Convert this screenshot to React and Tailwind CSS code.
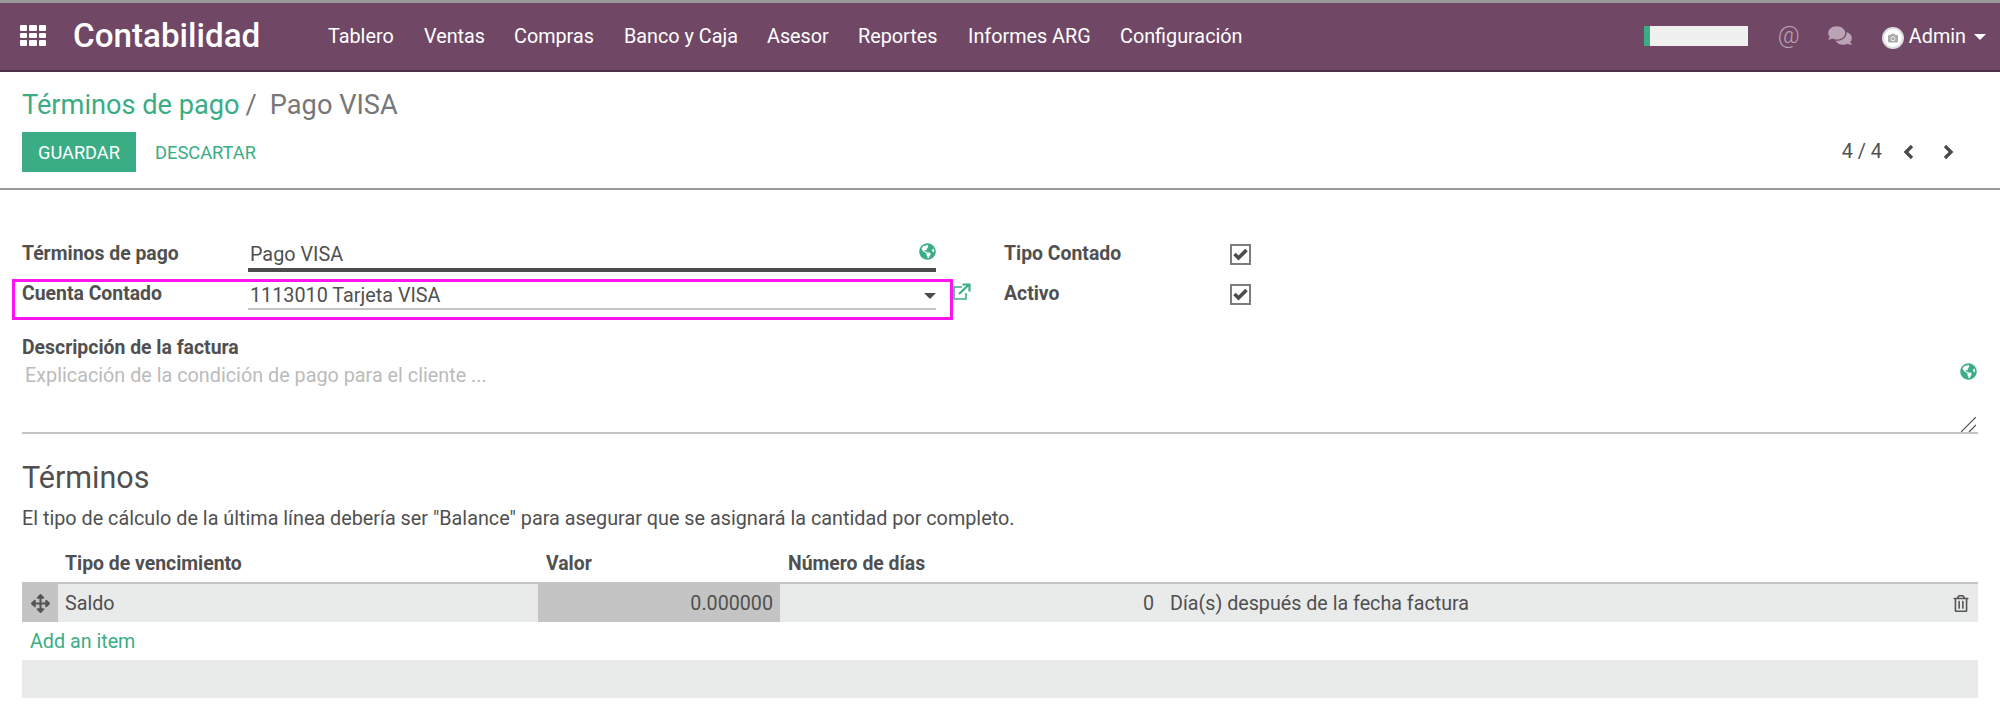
// App.jsx
import { FaGlobeAmericas, FaComments, FaArrowsAlt, FaRegTrashAlt, FaCamera } from "react-icons/fa";

const menus = [
  ["Tablero", "w-[96px]"],
  ["Ventas", "w-[90px]"],
  ["Compras", "w-[110px]"],
  ["Banco y Caja", "w-[143px]"],
  ["Asesor", "w-[91px]"],
  ["Reportes", "w-[110px]"],
  ["Informes ARG", "w-[152px]"],
  ["Configuración", "w-[140px]"],
];

function AppsIcon() {
  return (
    <div className="grid grid-cols-3 gap-[2px] w-[26px] h-[21px]">
      {[...Array(9)].map((_, i) => (
        <div key={i} className="bg-white rounded-[1px]" />
      ))}
    </div>
  );
}

function Checkbox() {
  return (
    <div className="w-[21px] h-[21px] border-2 border-[#7c7c7c] flex items-center justify-center">
      <svg className="w-[15px] h-[13px]" viewBox="0 0 15 13" fill="none" stroke="#4c4c4c" strokeWidth="3.6">
        <path d="M1.5 6 L5.5 10 L13.5 2" />
      </svg>
    </div>
  );
}

function Chevron({ d }) {
  return (
    <svg className="w-[11px] h-[16px]" viewBox="0 0 11 16" fill="none" stroke="#4c4c4c" strokeWidth="3.4">
      <path d={d} />
    </svg>
  );
}

function Navbar() {
  return (
    <div className="h-[72px] shrink-0 bg-[#704865] border-t-[3px] border-t-[#9a9a9a] border-b-[2px] border-b-[#4e3148] flex items-center text-white">
      <div className="ml-[20px] w-[53px] -mt-[2px]">
        <AppsIcon />
      </div>
      <div className="w-[255px] text-[33.2px] font-medium leading-none -mt-[1px]">Contabilidad</div>
      <div className="flex text-[19.8px] mt-[1px]">
        {menus.map(([name, width]) => (
          <div key={name} className={width}>{name}</div>
        ))}
      </div>
      <div className="ml-auto flex items-center mr-[14px]">
        <div className="w-[104px] h-[20px] bg-[#f0f0f0] flex mr-[30px] -mt-[1px]">
          <div className="w-[6px] bg-[#3aad85]" />
        </div>
        <div className="w-[50px] text-[24px] font-light leading-none text-[#b9a3b4] -mt-[3px]">@</div>
        <FaComments className="w-[24px] h-[21px] text-[#b9a3b4] mr-[30px] -mt-[2px]" />
        <div className="w-[22px] h-[22px] rounded-full bg-white border-2 border-[#ddd] flex items-center justify-center mr-[5px] mt-[3px]">
          <FaCamera className="w-[10px] h-[10px] text-[#aaa]" />
        </div>
        <div className="text-[19.8px] mt-[1px]">Admin</div>
        <div className="ml-[8px] border-x-[6px] border-x-transparent border-t-[6px] border-t-white" />
      </div>
    </div>
  );
}

function ControlPanel() {
  return (
    <div className="h-[118px] shrink-0 border-b-[2px] border-b-[#999] px-[22px] pt-[16px]">
      <div className="text-[27.2px] leading-[34px] text-[#777]">
        <span className="text-[#3aad85]">Términos de pago</span>
        <span className="ml-[6px]">/</span>
        <span className="ml-[13px]">Pago VISA</span>
      </div>
      <div className="flex items-center mt-[10px]">
        <div className="w-[114px] h-[40px] bg-[#3aad85] text-white text-[18.2px] flex items-center justify-center pt-[1px]">GUARDAR</div>
        <div className="ml-[19px] text-[18.3px] text-[#3aad85] pt-[1px]">DESCARTAR</div>
        <div className="ml-auto flex items-center text-[#505050] mr-[24px]">
          <div className="text-[19.8px] mr-[21px] -mt-[1px]">4 / 4</div>
          <div className="mr-[29px] flex"><Chevron d="M9 2 L3 8 L9 14" /></div>
          <div className="flex"><Chevron d="M2 2 L8 8 L2 14" /></div>
        </div>
      </div>
    </div>
  );
}

function MainFields() {
  return (
    <div className="flex items-start">
      <div className="w-[914px] relative">
        <div className="flex h-[39px] items-start">
          <div className="w-[226px] font-bold text-[19.4px] leading-[26px] pt-[8px]">Términos de pago</div>
          <div className="flex-1 h-[39px] border-b-[4px] border-b-[#4c4c4c] relative text-[19.8px] leading-[26px] pt-[9px] pl-[2px]">
            Pago VISA
            <FaGlobeAmericas className="absolute right-0 top-[10px] w-[17px] h-[17px] text-[#3aad85]" />
          </div>
        </div>
        <div className="flex h-[40px] items-start mt-[7px]">
          <div className="w-[226px] font-bold text-[19.4px] leading-[26px] pt-[2px]">Cuenta Contado</div>
          <div className="flex-1 h-[31px] border-b-[2px] border-b-[#c4c4c4] relative text-[19.8px] leading-[26px] pt-[4px] pl-[2px]">
            1113010 Tarjeta VISA
            <div className="absolute right-0 top-[14px] border-x-[6px] border-x-transparent border-t-[6px] border-t-[#4c4c4c]" />
          </div>
        </div>
        <div className="absolute left-[-10px] right-[-17px] top-[46px] h-[41px] border-[3px] border-[#ff14f0]" />
        <svg className="absolute right-[-35px] top-[50px] w-[18px] h-[17px]" viewBox="0 0 18 17" fill="none" stroke="#3aad85">
          <path d="M9 4 H1 V16 H13 V10" strokeWidth="1.6" />
          <path d="M6 11 L15 2.5 M9.5 1.5 H16.5 V8.5" strokeWidth="2.2" />
        </svg>
      </div>
      <div className="ml-[68px] w-[247px] mt-[1px] font-bold text-[19.4px]">
        <div className="flex items-center justify-between h-[40px]">
          <div className="leading-[26px] -mt-[1px]">Tipo Contado</div>
          <Checkbox />
        </div>
        <div className="flex items-center justify-between h-[40px]">
          <div className="leading-[26px] -mt-[1px]">Activo</div>
          <Checkbox />
        </div>
      </div>
    </div>
  );
}

function Description() {
  return (
    <div className="mt-[15px]">
      <div className="font-bold text-[19.4px] leading-[26px] pt-[1px]">Descripción de la factura</div>
      <div className="h-[73px] border-b-[2px] border-b-[#c4c4c4] relative text-[19.8px] leading-[26px] text-[#bbb] pl-[3px] pt-[2px]">
        Explicación de la condición de pago para el cliente ...
        <FaGlobeAmericas className="absolute right-[1px] top-[2px] w-[17px] h-[17px] text-[#3aad85]" />
        <svg className="absolute right-[2px] bottom-0 w-[15px] h-[15px]" viewBox="0 0 15 15" stroke="#4c4c4c" strokeWidth="1.2" fill="none">
          <path d="M0 15 L15 0 M8 15 L15 8" />
        </svg>
      </div>
    </div>
  );
}

function TermsTable() {
  return (
    <div className="mt-[25px]">
      <div className="text-[30.5px] leading-[36px] pt-[1px] h-[36px]">Términos</div>
      <div className="text-[19.8px] leading-[26px] mt-[10px] pt-[1px] h-[26px]">
        El tipo de cálculo de la última línea debería ser "Balance" para asegurar que se asignará la cantidad por completo.
      </div>
      <div className="flex font-bold text-[19.4px] leading-[26px] h-[40px] items-center mt-[13px] border-b-[2px] border-b-[#c4c4c4] pt-[2px]">
        <div className="w-[516px] pl-[43px]">Tipo de vencimiento</div>
        <div className="w-[242px] pl-[8px]">Valor</div>
        <div className="pl-[8px]">Número de días</div>
      </div>
      <div className="flex h-[38px] bg-[#e9eaea] text-[19.7px] items-center">
        <div className="w-[36px] h-full bg-[#c4c4c4] flex items-center justify-center">
          <FaArrowsAlt className="w-[19px] h-[19px] text-[#555]" />
        </div>
        <div className="w-[480px] pl-[7px] pt-[1px]">Saldo</div>
        <div className="w-[242px] h-full bg-[#c4c4c4] flex items-center justify-end pr-[7px] pt-[1px]">0.000000</div>
        <div className="w-[374px] text-right pt-[1px]">0</div>
        <div className="ml-[16px] pt-[1px]">Día(s) después de la fecha factura</div>
        <FaRegTrashAlt className="ml-auto mr-[9px] w-[16px] h-[17px] text-[#555]" />
      </div>
      <div className="h-[38px] flex items-center pl-[8px] text-[19.7px] text-[#3aad85] pt-[2px]">Add an item</div>
      <div className="h-[38px] bg-[#e9eaea]" />
    </div>
  );
}

export default function App() {
  return (
    <div className="h-[722px] flex flex-col bg-white text-[#505050] overflow-hidden font-['Roboto',sans-serif]">
      <Navbar />
      <ControlPanel />
      <div className="px-[22px] pt-[43px]">
        <MainFields />
        <Description />
        <TermsTable />
      </div>
    </div>
  );
}
